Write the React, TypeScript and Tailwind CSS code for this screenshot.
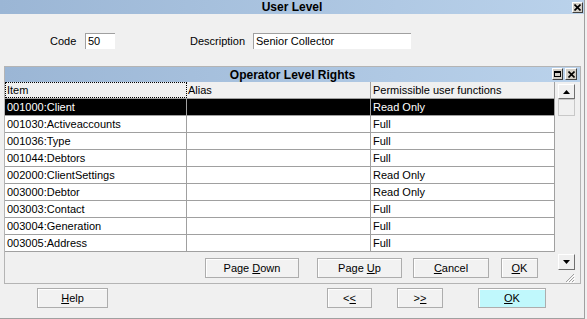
import React from "react";

const rows = [
  ["001000:Client", "Read Only"],
  ["001030:Activeaccounts", "Full"],
  ["001036:Type", "Full"],
  ["001044:Debtors", "Full"],
  ["002000:ClientSettings", "Read Only"],
  ["003000:Debtor", "Read Only"],
  ["003003:Contact", "Full"],
  ["003004:Generation", "Full"],
  ["003005:Address", "Full"],
];

function Btn({
  children,
  className = "",
  face = "bg-[#f2f2f2]",
}: {
  children: React.ReactNode;
  className?: string;
  face?: string;
}) {
  return (
    <div
      className={`h-[20px] flex items-center justify-center border border-[#adadad] shadow-[inset_1px_1px_0_#ffffff] text-[11px] text-black ${face} ${className}`}
    >
      {children}
    </div>
  );
}

function SmallBox({ children, className = "" }: { children: React.ReactNode; className?: string }) {
  return (
    <div
      className={`flex items-center justify-center border border-t-white border-l-white border-r-[#404040] border-b-[#404040] bg-[#d4d0c8] ${className}`}
    >
      {children}
    </div>
  );
}

export default function App() {
  return (
    <div
      className="w-[587px] h-[319px] bg-[#f0f0f0] overflow-hidden text-[11px] text-black"
      style={{ fontFamily: '"Liberation Sans", Arial, sans-serif' }}
    >
      <div className="w-[585px] h-[319px] border-r border-b border-[#a0a0a0] flex flex-col">
        {/* title bar */}
        <div className="relative h-[14px] bg-gradient-to-r from-[#9bb6d5] to-[#bad2eb] flex items-center justify-center">
          <span className="font-bold text-[12px] leading-none">User Level</span>
          <SmallBox className="absolute right-[1px] top-[2px] w-[11px] h-[11px]">
            <svg width="7" height="7" viewBox="0 0 7 7">
              <path d="M0.5 0.5 L6.5 6.5 M6.5 0.5 L0.5 6.5" stroke="#000" strokeWidth="1.6" />
            </svg>
          </SmallBox>
        </div>

        {/* form row */}
        <div className="flex items-center mt-[19px] h-[16px] text-[11px]">
          <span className="ml-[50px] w-[35px]">Code</span>
          <div className="w-[30px] h-[16px] bg-white border-t border-l border-[#a0a0a0] pl-[2px] leading-[15px]">50</div>
          <span className="ml-[75px] w-[63px]">Description</span>
          <div className="w-[158px] h-[16px] bg-white border-t border-l border-[#a0a0a0] pl-[2px] leading-[15px]">Senior Collector</div>
        </div>

        {/* panel */}
        <div className="ml-[4px] mt-[17px] w-[577px] h-[218px] border border-[#b4b4b4] flex flex-col">
          <div className="relative h-[15px] bg-gradient-to-r from-[#9bb6d5] to-[#bad2eb] flex items-center justify-center">
            <span className="font-bold text-[12px] leading-none">Operator Level Rights</span>
            <div className="absolute right-[3px] top-[1px] flex gap-[2px]">
              <SmallBox className="w-[11px] h-[12px]">
                <div className="w-[7px] h-[6px] border border-black border-t-2" />
              </SmallBox>
              <SmallBox className="w-[12px] h-[12px]">
                <svg width="7" height="7" viewBox="0 0 7 7">
                  <path d="M0.5 0.5 L6.5 6.5 M6.5 0.5 L0.5 6.5" stroke="#000" strokeWidth="1.6" />
                </svg>
              </SmallBox>
            </div>
          </div>

          <div className="flex flex-1">
            <div className="w-[550px] flex flex-col">
              <div className="bg-white border-r border-[#a0a0a0]">
                <div className="flex h-[17px] bg-[#f0f0f0] border-b border-[#a0a0a0]">
                  <div className="w-[182px] border border-dotted border-black pl-[1px] leading-[14px]">Item</div>
                  <div className="w-[184px] border-r border-[#a0a0a0] pl-[1px] leading-[16px]">Alias</div>
                  <div className="flex-1 pl-[2px] leading-[16px]">Permissible user functions</div>
                </div>
                {rows.map(([item, right], i) => (
                  <div
                    key={item}
                    className={`flex h-[17px] border-b border-[#a0a0a0] leading-[16px] ${i === 0 ? "bg-black text-white" : "bg-white"}`}
                  >
                    <div className="w-[182px] border-r border-[#a0a0a0] pl-[2px]">{item}</div>
                    <div className="w-[184px] border-r border-[#a0a0a0]" />
                    <div className="flex-1 pl-[2px]">{right}</div>
                  </div>
                ))}
              </div>
              <div className="flex mt-[6px]">
                <Btn className="ml-[200px] w-[94px]">
                  Page&nbsp;<u>D</u>own
                </Btn>
                <Btn className="ml-[18px] w-[85px]">
                  Page&nbsp;<u>U</u>p
                </Btn>
                <Btn className="ml-[11px] w-[76px]">
                  <u>C</u>ancel
                </Btn>
                <Btn className="ml-[12px] w-[37px]">
                  <u>O</u>K
                </Btn>
              </div>
            </div>

            <div className="ml-[3px] w-[17px] flex flex-col">
              <SmallBox className="mt-[2px] h-[15px] bg-[#f0f0f0] border-t-[#f8f8f8] border-l-[#f8f8f8] border-r-[#707070] border-b-[#707070]">
                <svg width="7" height="4" viewBox="0 0 7 4">
                  <path d="M3.5 0 L7 4 L0 4 Z" fill="#000" />
                </svg>
              </SmallBox>
              <div className="h-[17px] border border-[#c8c8c8] bg-[#f0f0f0]" />
              <div className="flex-1 bg-[#f0f0f0]" />
              <SmallBox className="h-[16px] bg-[#f0f0f0] border-t-[#f8f8f8] border-l-[#f8f8f8] border-r-[#707070] border-b-[#707070]">
                <svg width="7" height="4" viewBox="0 0 7 4">
                  <path d="M0 0 L7 0 L3.5 4 Z" fill="#000" />
                </svg>
              </SmallBox>
              <div className="h-[13px] flex justify-end items-end">
                <svg width="11" height="11" viewBox="0 0 11 11">
                  <path d="M10 2 L2 10 M10 5 L5 10 M10 8 L8 10" stroke="#a0a0a0" strokeWidth="1" />
                  <path d="M11 3 L3 11 M11 6 L6 11 M11 9 L9 11" stroke="#ffffff" strokeWidth="1" />
                </svg>
              </div>
            </div>
          </div>
        </div>

        {/* bottom buttons */}
        <div className="flex mt-[4px]">
          <Btn className="ml-[37px] w-[71px]">
            <u>H</u>elp
          </Btn>
          <Btn className="ml-[219px] w-[45px]">
            &lt;<u>&lt;</u>
          </Btn>
          <Btn className="ml-[25px] w-[46px]">
            &gt;<u>&gt;</u>
          </Btn>
          <Btn className="ml-[35px] w-[68px]" face="bg-[#c0f8fc]">
            <u>O</u>K
          </Btn>
        </div>
      </div>
    </div>
  );
}
